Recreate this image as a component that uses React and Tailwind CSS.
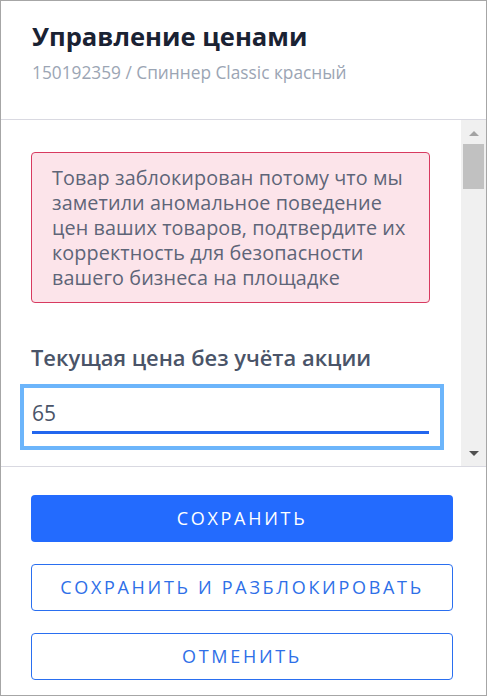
import React from "react";

const font = { fontFamily: '"Open Sans", "Noto Sans", sans-serif' };

const ScrollBar = () => (
  <div className="w-[25px] bg-[#f0f0f0] flex flex-col items-center">
    <div className="h-[24px] flex items-center justify-center pt-[2px]">
      <div className="w-0 h-0 border-l-[5px] border-r-[5px] border-b-[5px] border-l-transparent border-r-transparent border-b-[#a3a3a3]" />
    </div>
    <div className="w-[21px] h-[45px] bg-[#c1c1c1]" />
    <div className="flex-1" />
    <div className="h-[24px] flex items-center justify-center pb-[2px]">
      <div className="w-0 h-0 border-l-[5px] border-r-[5px] border-t-[5px] border-l-transparent border-r-transparent border-t-[#505050]" />
    </div>
  </div>
);

export default function App() {
  return (
    <div
      style={font}
      className="w-[487px] h-[696px] bg-white border border-[#a6a6a6] flex flex-col overflow-hidden"
    >
      {/* Header */}
      <div className="h-[119px] shrink-0 border-b border-[#d9d9e1] px-[31px] pt-[19px]">
        <h1 className="text-[25.6px] leading-[34px] font-bold text-[#1a2233]">
          Управление ценами
        </h1>
        <p className="mt-[7px] text-[17.3px] leading-[24px] text-[#9ba5b4]">
          150192359 / Спиннер Classic красный
        </p>
      </div>

      {/* Scrollable body */}
      <div className="h-[347px] shrink-0 flex border-b border-[#d9d9e1]">
        <div className="flex-1 overflow-hidden pl-[30px] pr-[31px] pt-[32px]">
          <div className="rounded-[4px] border border-[#d83a60] bg-[#fce4ea] pl-[20px] pr-[16px] py-[12px]">
            <p className="text-[19.8px] leading-[25px] text-[#5e6578] tracking-[0.1px]">
              Товар заблокирован потому что мы заметили аномальное поведение
              цен ваших товаров, подтвердите их корректность для безопасности
              вашего бизнеса на площадке
            </p>
          </div>

          <div className="mt-[41px] text-[21.9px] leading-[28px] font-semibold text-[#4a5468]">
            Текущая цена без учёта акции
          </div>

          <div className="mt-[12px] -ml-[11px] -mr-[14px] border-[4px] border-[#6cb5fb] px-[8px] pt-[11px]">
            <div className="border-b-[3px] border-[#2266ee] pb-[4px] mr-[3px]">
              <span className="text-[21px] leading-[28px] text-[#4a5468]">65</span>
            </div>
            <div className="h-[12px]" />
          </div>
        </div>
        <ScrollBar />
      </div>

      {/* Footer buttons */}
      <div className="flex flex-col gap-[22px] pl-[30px] pr-[33px] pt-[28px]">
        <button className="h-[47px] rounded-[4px] bg-[#236bfe] text-white text-[18px] tracking-[2.7px] uppercase">
          Сохранить
        </button>
        <button className="h-[47px] rounded-[4px] border border-[#2a6ff0] bg-white text-[#2e6fe8] text-[18px] tracking-[2.7px] uppercase">
          Сохранить и разблокировать
        </button>
        <button className="h-[47px] rounded-[4px] border border-[#2a6ff0] bg-white text-[#2e6fe8] text-[18px] tracking-[2.7px] uppercase">
          Отменить
        </button>
      </div>
    </div>
  );
}
